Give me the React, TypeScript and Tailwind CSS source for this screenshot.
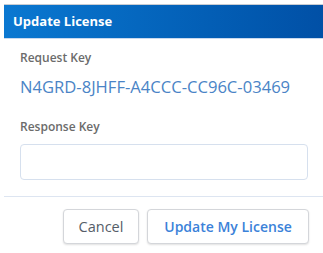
export default function App() {
  return (
    <div className="w-[323px] h-[253px] bg-white pl-[4px] pt-[4px] overflow-hidden font-['Open_Sans',sans-serif]">
      <div className="border-t border-[#c8ccd2]">
        <div className="h-[34px] flex items-center pl-[9px] bg-gradient-to-r from-[#0b78d1] to-[#0150a6] border-b border-[#c9d9ee]">
          <span className="text-white text-[13px] font-bold">Update License</span>
        </div>
        <div className="pl-[16px] pr-[13px] pt-[11px]">
          <div className="text-[12px] font-semibold text-[#6b6b6b] leading-[16px]">Request Key</div>
          <div className="mt-[10px] text-[16.6px] text-[#4a84c6] leading-[22px]">N4GRD-8JHFF-A4CCC-CC96C-03469</div>
          <div className="mt-[21px] text-[12px] font-semibold text-[#6b6b6b] leading-[16px]">Response Key</div>
          <input className="mt-[9px] w-[288px] h-[36px] border border-[#d6e0ee] rounded-[4px] outline-none" />
        </div>
        <div className="mt-[16px] border-t border-[#dde5f1]" />
        <div className="flex justify-end gap-[8px] pr-[14px] pt-[12px]">
          <button className="w-[76px] h-[35px] rounded-[4px] border border-[#d4d6da] shadow-[0_1px_2px_rgba(0,0,0,0.12)] text-[14.5px] text-[#555d68] bg-white">Cancel</button>
          <button className="w-[162px] h-[35px] rounded-[4px] border border-[#d4d6da] shadow-[0_1px_2px_rgba(0,0,0,0.12)] text-[14px] font-semibold text-[#3b82d9] bg-white">Update My License</button>
        </div>
      </div>
    </div>
  );
}
